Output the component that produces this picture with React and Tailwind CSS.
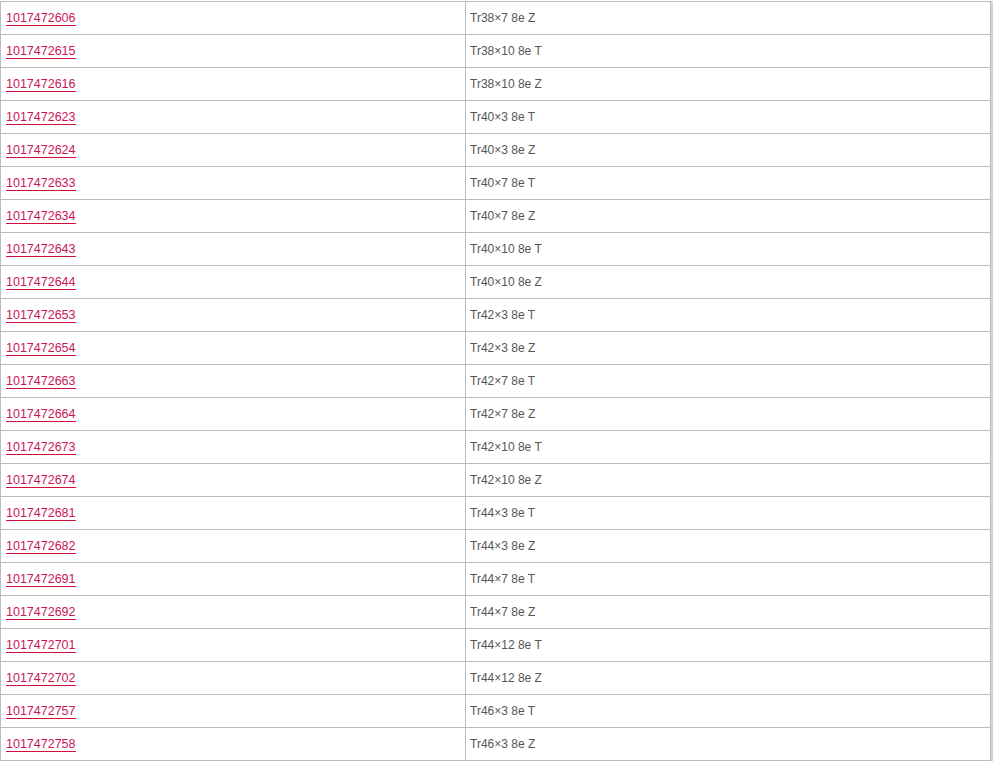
const rows = [
  ["1017472606", "Tr38×7 8e Z"],
  ["1017472615", "Tr38×10 8e T"],
  ["1017472616", "Tr38×10 8e Z"],
  ["1017472623", "Tr40×3 8e T"],
  ["1017472624", "Tr40×3 8e Z"],
  ["1017472633", "Tr40×7 8e T"],
  ["1017472634", "Tr40×7 8e Z"],
  ["1017472643", "Tr40×10 8e T"],
  ["1017472644", "Tr40×10 8e Z"],
  ["1017472653", "Tr42×3 8e T"],
  ["1017472654", "Tr42×3 8e Z"],
  ["1017472663", "Tr42×7 8e T"],
  ["1017472664", "Tr42×7 8e Z"],
  ["1017472673", "Tr42×10 8e T"],
  ["1017472674", "Tr42×10 8e Z"],
  ["1017472681", "Tr44×3 8e T"],
  ["1017472682", "Tr44×3 8e Z"],
  ["1017472691", "Tr44×7 8e T"],
  ["1017472692", "Tr44×7 8e Z"],
  ["1017472701", "Tr44×12 8e T"],
  ["1017472702", "Tr44×12 8e Z"],
  ["1017472757", "Tr46×3 8e T"],
  ["1017472758", "Tr46×3 8e Z"],
];

export default function App() {
  return (
    <div className="h-[762px] overflow-hidden bg-white pt-px font-['Liberation_Sans',Arial,sans-serif] text-[12px]">
      <div className="w-[993px] border-r-2 border-[#d4d4d4]">
        <table className="w-[991px] border-collapse border-l border-r border-[#bcbcbc]">
          <tbody>
            {rows.map(([code, name]) => (
              <tr key={code} className="h-[33px] border-t border-b border-[#bcbcbc]">
                <td className="w-[465px] border-r border-[#bcbcbc] pl-[5px] align-middle">
                  <a
                    href="#"
                    className="border-b border-[#d0103a] text-[12.5px] text-[#cc1559] no-underline"
                  >
                    {code}
                  </a>
                </td>
                <td className="pl-[4px] align-middle text-[#555555]">{name}</td>
              </tr>
            ))}
          </tbody>
        </table>
      </div>
    </div>
  );
}
